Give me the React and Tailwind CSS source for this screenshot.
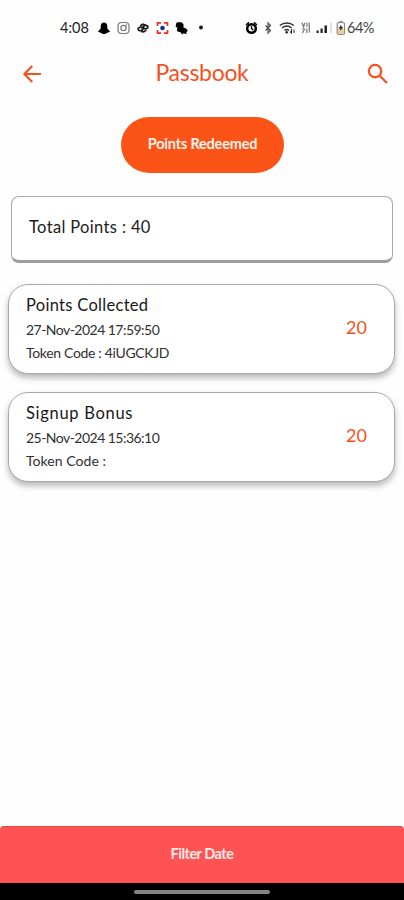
import React from "react";

function StatusBar() {
  return (
    <header className="flex h-[46px] shrink-0 items-end pl-[60px] text-black">
      <div className="flex h-[36px] items-center">
        <span className="w-[37px] whitespace-nowrap text-[14.5px] leading-[18px] text-[#222]">4:08</span>
        <svg width="110" height="16" viewBox="97 20 110 16" className="shrink-0">
          <path d="M104 22.5c2 0 3.200 1.500 3.200 3.500l.2 2.500 2.600 3c-.6.8-1.700.9-2.800 1.200-1 .9-2 1.300-3.200 1.300s-2.200-.4-3.200-1.300c-1.100-.3-2.200-.4-2.800-1.200l2.600-3 .2-2.500c0-2 1.200-3.500 3.200-3.500z" fill="#000" />
          <g fill="none" stroke="#777" strokeWidth="1.200">
            <rect x="118" y="22.500" width="11" height="11" rx="3.500" />
            <circle cx="123.500" cy="28" r="2.600" />
          </g>
          <circle cx="126.600" cy="25" r=".7" fill="#777" />
          <g fill="none" stroke="#1a1a1a" strokeWidth="1.700" transform="rotate(-10 143 28)">
            <ellipse cx="140.300" cy="28.500" rx="2.300" ry="1.700" />
            <ellipse cx="145.700" cy="27.500" rx="2.300" ry="1.700" />
            <path d="M140.500 25.500l3-1.300 2.500 1.300M140.500 31l2.500 1 3-1.300M142 27l2 2" />
          </g>
          <path d="M157.500 26v-3.200h3.500M164 22.800h3.500V26M167.500 30v3.200H164M161 33.200h-3.500V30" fill="none" stroke="#f32a2a" strokeWidth="1.700" />
          <circle cx="162.500" cy="28" r="2.300" fill="#1c2a8c" />
          <path d="M177 22.300h4.500l2 2v3.200l3 1.200 1.300 2.300-1.500 1 .2 2.200-2.800-1-1.500 1.200-1.700-2.200-3-.6-.8-2.400 1-1.500-2-.7.300-3z" fill="#000" />
          <circle cx="201" cy="27.500" r="1.900" fill="#111" />
        </svg>
        <svg width="102" height="16" viewBox="244 20 102 16" className="ml-[37px] shrink-0">
          <circle cx="251.500" cy="28.500" r="4.300" fill="#fff" stroke="#000" strokeWidth="2.500" />
          <path d="M246 25l3-2.600M257 25l-3-2.600M251.500 26v2.700l1.800 1.100" fill="none" stroke="#000" strokeWidth="1.400" />
          <path d="M265.500 25.500l5 5-2.500 2.500V23l2.500 2.500-5 5" fill="none" stroke="#555" strokeWidth="1.300" />
          <g fill="none" stroke="#333" strokeWidth="1.500">
            <path d="M279.800 25.500c4-3.500 10-3.500 14 0M282 28c3-2.500 6.700-2.500 9.600 0M284.500 30.500c1.500-1.200 3-1.200 4.500 0" />
            <path d="M291.500 29v4l-1.500-1.500M294 33v-3.500" strokeWidth="1.100" />
          </g>
          <circle cx="286.700" cy="32.300" r="1.200" fill="#222" />
          <g fill="none" stroke="#777" strokeWidth="1.200">
            <path d="M302 22.800l1.500 4 1.500-4M307 22.500v4.500M309.300 22.500v10M302 29h2.500l-2 4M306.800 28.500V33" />
          </g>
          <g fill="#222">
            <rect x="316.500" y="30.500" width="2.200" height="2.500" />
            <rect x="320.500" y="28.500" width="2.200" height="4.500" />
            <rect x="324.500" y="25.500" width="2.500" height="7.500" />
            <rect x="330" y="22.500" width="2" height="10.500" fill="#e1e1e1" />
          </g>
          <rect x="337.200" y="22.500" width="7.300" height="12" rx="1.700" fill="#fff" stroke="#888" strokeWidth="1.200" />
          <rect x="339.300" y="20.800" width="3.200" height="1.500" fill="#999" />
          <rect x="337.900" y="29" width="5.900" height="4.800" fill="#ecc98e" />
          <path d="M340.800 25.500v4.500M338.800 27.800h4" stroke="#333" strokeWidth="1.500" fill="none" />
        </svg>
        <span className="whitespace-nowrap pl-px text-[14.500px] leading-[18px] tracking-[-0.5px] text-[#444]">64%</span>
      </div>
    </header>
  );
}

function PointsCard({ title, titleSpacing, date, code, codeSpacing }) {
  return (
    <article className="flex h-[90px] items-center justify-between rounded-[20px] border border-[#a9a9a9] bg-white pl-[17px] pr-[27px] shadow-[0_4px_6px_rgba(0,0,0,0.28)]">
      <div className="flex flex-col whitespace-nowrap text-[#303030]">
        <h2 className={`h-[23px] text-[16.500px] leading-[20px] text-[#181818] ${titleSpacing}`}>{title}</h2>
        <p className="h-[23px] text-[14px] leading-[24px] tracking-[-0.53px]">{date}</p>
        <p className={`h-[23px] text-[14px] leading-[24px] ${codeSpacing}`}>{code}</p>
      </div>
      <span className="pb-[4px] text-[18px] leading-[22px] text-[#f4511e]">20</span>
    </article>
  );
}

export default function App() {
  return (
    <div className="flex h-[900px] w-[404px] flex-col overflow-hidden bg-[#fefefe] font-['Lato','Open_Sans',sans-serif]">
      <StatusBar />
      <nav className="flex h-[56px] shrink-0 items-center justify-between pl-[20px] pr-[13px] text-[#f4511e]">
        <button aria-label="Back">
          <svg width="24" height="24" viewBox="0 0 24 24" fill="currentColor">
            <path d="M21 11H6.800l6.200-6.200-1.500-1.500L2.900 12l8.600 8.700 1.500-1.500L6.800 13H21z" />
          </svg>
        </button>
        <h1 className="pb-[5px] pr-[5px] text-[23px] leading-[28px] tracking-[-0.3px]">Passbook</h1>
        <button aria-label="Search">
          <svg width="26" height="26" viewBox="0 0 24 24" fill="none" stroke="currentColor" strokeWidth="2.100">
            <circle cx="9.300" cy="9.300" r="5.700" />
            <path d="M13.800 13.800l6.500 6.500" />
          </svg>
        </button>
      </nav>
      <main className="flex grow flex-col pt-[15px]">
        <button className="ml-[121px] h-[56px] w-[163px] rounded-full bg-[#fc5317] pb-[3px] text-[14.500px] font-bold leading-[18px] tracking-[-0.2px] text-[#fff2eb]">
          Points Redeemed
        </button>
        <section className="mx-[11px] mt-[23px] flex h-[67px] items-center rounded-[8px] border border-b-[3px] border-[#a9a9a9] border-b-[#9c9c9c] bg-white pb-[2px] pl-[17px] text-[16.500px] tracking-[0.350px] text-[#202020]">
          Total Points : 40
        </section>
        <div className="ml-[8px] mr-[9px] mt-[21px] flex flex-col gap-[18px]">
          <PointsCard
            title="Points Collected"
            titleSpacing="tracking-[0.3px]"
            date="27-Nov-2024 17:59:50"
            code="Token Code : 4iUGCKJD"
            codeSpacing="tracking-[-0.33px]"
          />
          <PointsCard
            title="Signup Bonus"
            titleSpacing="tracking-[0.7px]"
            date="25-Nov-2024 15:36:10"
            code="Token Code :"
            codeSpacing="tracking-[0.05px]"
          />
        </div>
      </main>
      <button className="flex h-[57px] w-full shrink-0 items-center justify-center rounded-t-[4px] border-t border-[#ef4444] bg-[#ff5252] pb-[3px] text-[14.500px] font-bold tracking-[-0.500px] text-[#ffeaea]">
        Filter Date
      </button>
      <footer className="flex h-[17px] shrink-0 items-center justify-center bg-black">
        <div className="h-[4px] w-[136px] rounded-full bg-[#858585]" />
      </footer>
    </div>
  );
}
